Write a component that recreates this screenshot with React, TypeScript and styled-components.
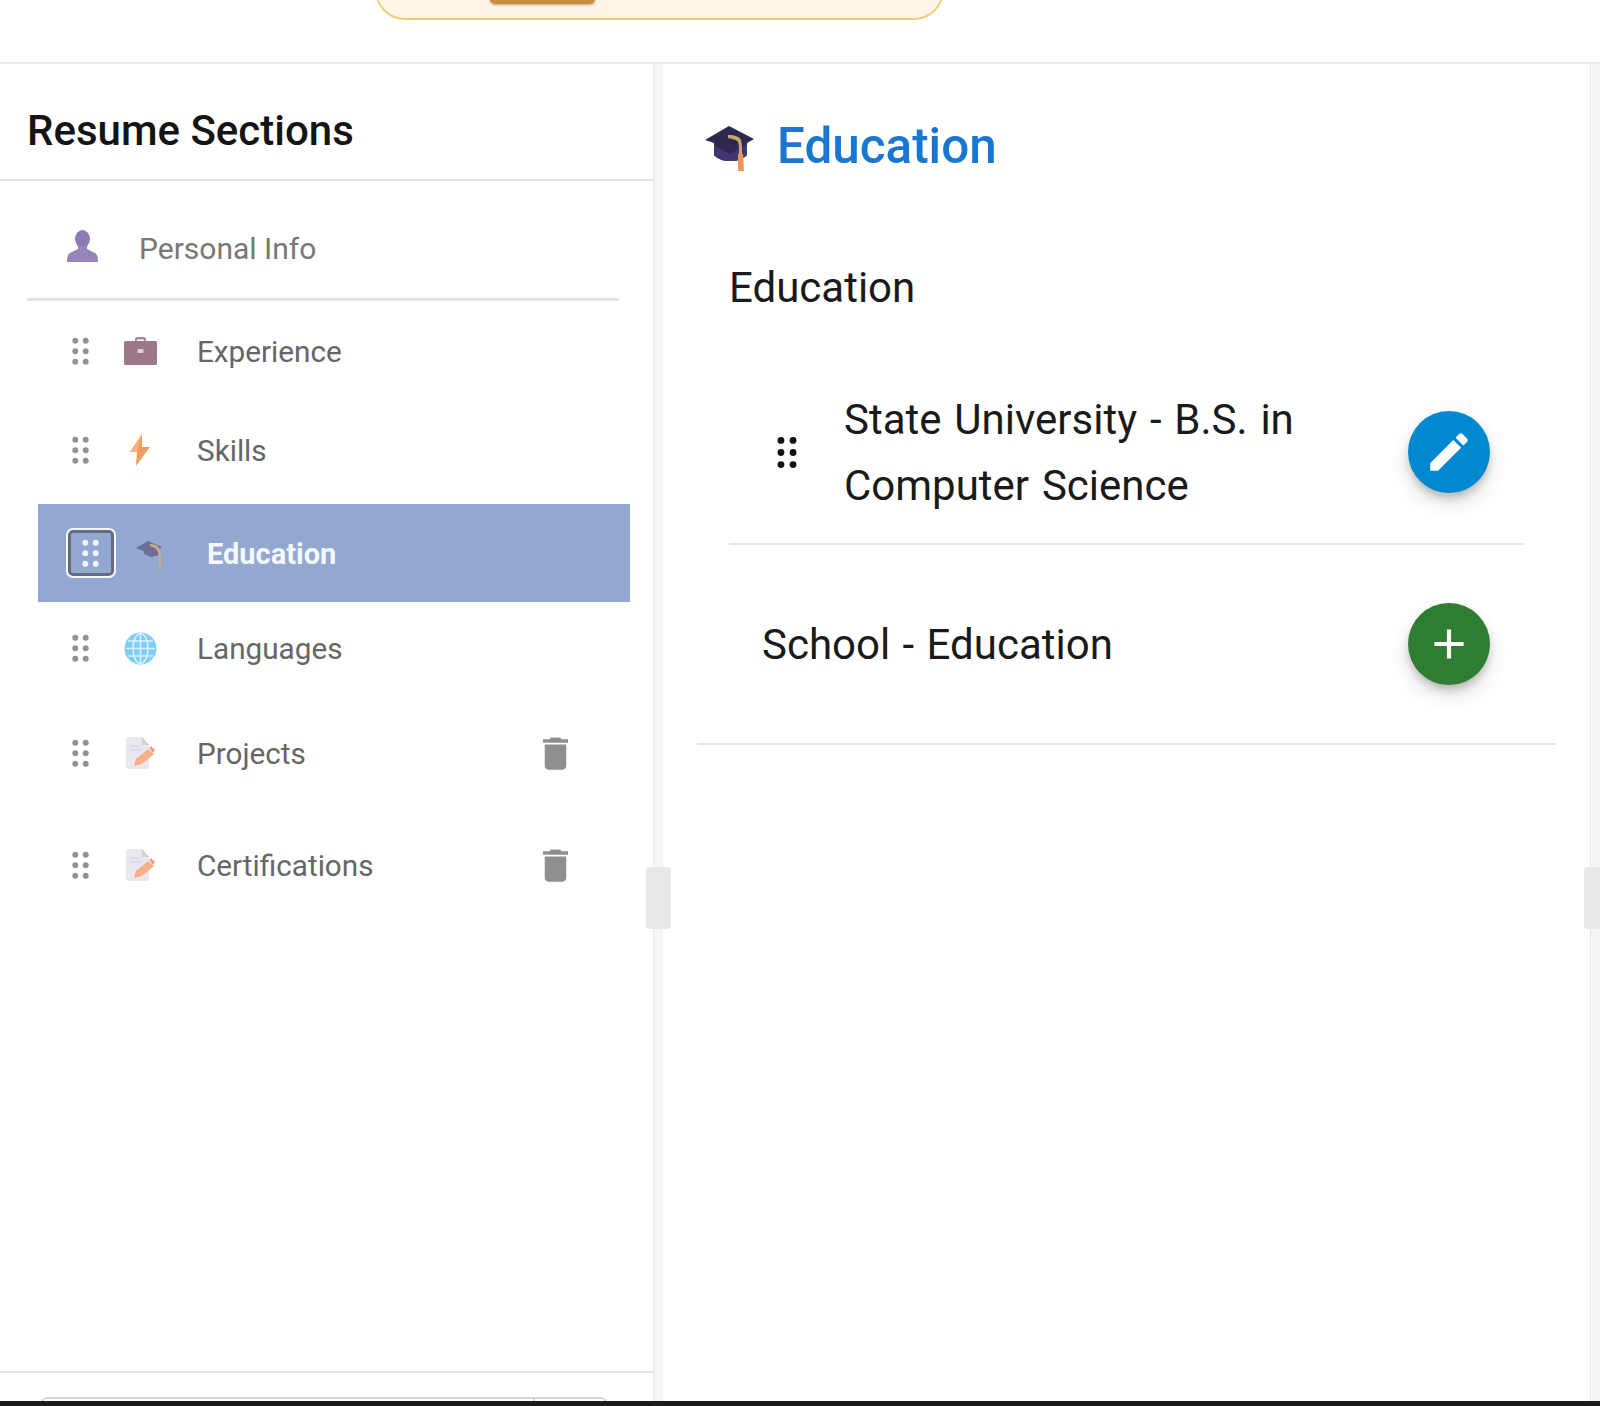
import styled, { createGlobalStyle } from "styled-components";

const GlobalStyle = createGlobalStyle`
  html, body {
    margin: 0;
    padding: 0;
    background: #fff;
    font-family: Roboto, "Liberation Sans", sans-serif;
  }
`;

const GripIcon = ({ width, color }: { width: number; color: string }) => (
  <svg width={width} height={width * 1.5} viewBox="0 0 20 30" fill={color}>
    {[4, 15, 26].map((y) => (
      <g key={y}>
        <circle cx="4.500" cy={y} r="3.100" />
        <circle cx="15.500" cy={y} r="3.100" />
      </g>
    ))}
  </svg>
);

const PersonIcon = () => (
  <svg width="31" height="32" viewBox="0 0 31 32">
    <ellipse cx="15.500" cy="9" rx="7.500" ry="9" fill="#8d7cb3" />
    <path d="M11 16h9v3l8 4c2 1 3 4 3 9H0c0-5 1-8 3-9l8-4z" fill="#9684bb" />
  </svg>
);

const BriefcaseIcon = () => (
  <svg width="33" height="28" viewBox="0 0 33 28">
    <path d="M11 5V2c0-1 1-2 2-2h7c1 0 2 1 2 2v3h-2V2.500h-7V5z" fill="#a58a96" />
    <rect x="0" y="4" width="33" height="24" rx="1.500" fill="#9c7787" />
    <rect x="13.500" y="12" width="6" height="4" rx="1" fill="#e3cdd6" />
  </svg>
);

const BoltIcon = () => (
  <svg width="20" height="32" viewBox="0 0 20 32">
    <path d="M12 0 0 18h7L6 32l14-19h-8z" fill="#f39a5e" />
    <path d="M12 0 0 18h7z" fill="#f6b27c" />
  </svg>
);

const FadedCapIcon = () => (
  <svg width="28" height="29" viewBox="0 0 28 29">
    <path d="M0 7 12 0l14 6-3 3v5l-8 2-7-3V10z" fill="#6d6f94" />
    <path d="M14 3c5 0 9 2 10 6 1 5 1 12 1 19h-2c0-6 0-13-1-17-1-3-4-5-8-6z" fill="#d9a77c" />
  </svg>
);

const GlobeIcon = () => (
  <svg width="33" height="33" viewBox="0 0 33 33">
    <circle cx="16.500" cy="16.500" r="16" fill="#7fcdf5" />
    <g fill="none" stroke="#d7f0fc" strokeWidth="1.600">
      <ellipse cx="16.500" cy="16.500" rx="7.500" ry="15" />
      <path d="M16.500 1.500v30M2 16.500h29M4 9h25M4 24h25" />
    </g>
  </svg>
);

const DocIcon = () => (
  <svg width="29" height="32" viewBox="0 0 29 32">
    <path d="M0 2c0-1 1-2 2-2h14l7 8v24H2c-1 0-2-1-2-2z" fill="#ebe7f0" />
    <path d="M16 0v8h7z" fill="#d5cfde" />
    <path d="M4 9h10M4 13h12" stroke="#d2cddb" strokeWidth="1.200" />
    <path d="M8 29l2-7L22 12l6 5-12 10z" fill="#f8b088" />
    <path d="M23 11l2-2 4 4-2 3z" fill="#f09a95" />
  </svg>
);

const TrashIcon = () => (
  <svg width="43" height="43" viewBox="0 0 24 24" fill="#8f8f8f">
    <path d="M6 19c0 1.100.9 2 2 2h8c1.100 0 2-.9 2-2V7H6v12zM19 4h-3.500l-1-1h-5l-1 1H5v2h14V4z" />
  </svg>
);

const CapIcon = () => (
  <svg width="49" height="45" viewBox="0 0 49 45">
    <path d="M0 14 24 0l25 13-7 4v12c-5 5-10 6-17 6-7 0-12-2-16-6V17z" fill="#2e2850" />
    <path d="M9 19 25 28l17-10v11c-5 5-10 6-17 6-7 0-12-2-16-6z" fill="#43356f" />
    <path d="M23 9c7 0 12 2 13 5 1 3 1 8 1 14h-3c0-5 0-10-1-12-1-2-5-3-10-4z" fill="#c9a85f" />
    <path d="M33 28h5l1 17h-6z" fill="#f0955a" />
  </svg>
);

const EditIcon = () => (
  <svg width="50" height="50" viewBox="0 0 24 24" fill="#fff">
    <path d="M3 17.250V21h3.750L17.810 9.940l-3.750-3.750L3 17.250zM20.710 7.040c.39-.39.39-1.020 0-1.410l-2.340-2.340c-.39-.39-1.020-.39-1.410 0l-1.830 1.830 3.750 3.750 1.830-1.830z" />
  </svg>
);

const AddIcon = () => (
  <svg width="50" height="50" viewBox="0 0 24 24" fill="#fff">
    <path d="M19 13h-6v6h-2v-6H5v-2h6V5h2v6h6v2z" />
  </svg>
);

type Section = {
  label: string;
  icon: JSX.Element;
  height: number;
  active?: boolean;
  removable?: boolean;
};

const sections: Section[] = [
  { label: "Experience", icon: <BriefcaseIcon />, height: 98 },
  { label: "Skills", icon: <BoltIcon />, height: 100 },
  { label: "Education", icon: <FadedCapIcon />, height: 98, active: true },
  { label: "Languages", icon: <GlobeIcon />, height: 92 },
  { label: "Projects", icon: <DocIcon />, height: 118, removable: true },
  { label: "Certifications", icon: <DocIcon />, height: 106, removable: true },
];

export default function App() {
  return (
    <Page>
      <GlobalStyle />
      <TopBar>
        <Banner>
          <BannerThumb />
        </Banner>
      </TopBar>
      <Workspace>
        <Sidebar>
          <SidebarHeader>
            <SidebarTitle>Resume Sections</SidebarTitle>
          </SidebarHeader>
          <SidebarBody>
            <PersonalRow>
              <PersonSlot>
                <PersonIcon />
              </PersonSlot>
              <PersonalLabel>Personal Info</PersonalLabel>
            </PersonalRow>
            <SectionList>
              {sections.map((s) => (
                <SectionRow key={s.label} $height={s.height} $active={s.active}>
                  <GripSlot $active={s.active}>
                    <GripIcon width={19} color={s.active ? "#f2f5ff" : "#929292"} />
                  </GripSlot>
                  <IconSlot $active={s.active}>{s.icon}</IconSlot>
                  <SectionLabel $active={s.active}>{s.label}</SectionLabel>
                  {s.removable && (
                    <RemoveSlot>
                      <TrashIcon />
                    </RemoveSlot>
                  )}
                </SectionRow>
              ))}
            </SectionList>
          </SidebarBody>
          <SidebarFooter>
            <FooterField>
              <FooterFieldEnd />
            </FooterField>
          </SidebarFooter>
        </Sidebar>
        <Resizer>
          <ResizeHandle />
        </Resizer>
        <Editor>
          <EditorHeader>
            <HeaderIcon>
              <CapIcon />
            </HeaderIcon>
            <EditorTitle>Education</EditorTitle>
          </EditorHeader>
          <EntryGroup>
            <GroupTitle>Education</GroupTitle>
            <EntryRow>
              <EntryGrip>
                <GripIcon width={22} color="#111" />
              </EntryGrip>
              <EntryText>State University - B.S. in Computer Science</EntryText>
              <RoundButton $color="#0288d1">
                <EditIcon />
              </RoundButton>
            </EntryRow>
            <AddRow>
              <AddLabel>School - Education</AddLabel>
              <RoundButton $color="#2e7d32">
                <AddIcon />
              </RoundButton>
            </AddRow>
          </EntryGroup>
        </Editor>
        <Resizer>
          <ResizeHandle $edge />
        </Resizer>
      </Workspace>
      <BottomEdge />
    </Page>
  );
}

const Page = styled.div`
  width: 1600px;
  height: 1406px;
  display: flex;
  flex-direction: column;
  overflow: hidden;
  background: #fff;
`;

const TopBar = styled.header`
  height: 64px;
  flex: none;
  box-sizing: border-box;
  border-bottom: 2px solid #e9ebeb;
  padding-left: 375px;
`;

const Banner = styled.div`
  width: 569px;
  height: 60px;
  margin-top: -40px;
  box-sizing: border-box;
  display: flex;
  align-items: flex-end;
  padding: 0 0 14px 113px;
  background: #fff6e8;
  border: 2px solid #f3cd75;
  border-radius: 30px;
`;

const BannerThumb = styled.div`
  width: 105px;
  height: 12px;
  border-radius: 5px;
  background: #c98d3f;
  box-shadow: 0 1px 3px rgba(120, 80, 30, 0.5);
`;

const Workspace = styled.div`
  flex: 1;
  min-height: 0;
  display: flex;
`;

const Sidebar = styled.aside`
  width: 653px;
  flex: none;
  display: flex;
  flex-direction: column;
`;

const SidebarHeader = styled.div`
  height: 117px;
  box-sizing: border-box;
  flex: none;
  display: flex;
  align-items: center;
  padding: 18px 0 0 27px;
  border-bottom: 2px solid #e3e5e5;
`;

const SidebarTitle = styled.h2`
  margin: 0;
  font-size: 42px;
  font-weight: 500;
  color: #141414;
`;

const SidebarBody = styled.div`
  flex: 1;
  min-height: 0;
`;

const PersonalRow = styled.div`
  height: 120px;
  box-sizing: border-box;
  margin: 0 34px 0 27px;
  display: flex;
  align-items: center;
  padding: 17px 0 0 40px;
  border-bottom: 3px solid #e2e4e4;
`;

const PersonSlot = styled.div`
  width: 31px;
  margin: -4px 41px 0 0;
  display: flex;
`;

const PersonalLabel = styled.span`
  font-size: 30px;
  color: #777;
`;

const SectionList = styled.div`
  margin: 1px 23px 0 38px;
  display: flex;
  flex-direction: column;
`;

const SectionRow = styled.div<{ $height: number; $active?: boolean }>`
  height: ${({ $height }) => $height}px;
  margin-top: ${({ $active }) => ($active ? "4px" : "0")};
  flex: none;
  display: flex;
  align-items: center;
  padding-left: ${({ $active }) => ($active ? "28px" : "18px")};
  background: ${({ $active }) => ($active ? "#93a8d1" : "transparent")};
`;

const GripSlot = styled.div<{ $active?: boolean }>`
  width: 50px;
  height: 50px;
  flex: none;
  box-sizing: border-box;
  display: flex;
  align-items: center;
  justify-content: center;
  padding-right: 2px;
  border-radius: 7px;
  ${({ $active }) => $active && "border: 2px solid #f4f6fb; box-shadow: inset 0 0 0 3px #666b7d;"}
`;

const IconSlot = styled.div<{ $active?: boolean }>`
  width: 68px;
  margin: ${({ $active }) => ($active ? "4px" : "0")} 23px 0 0;
  flex: none;
  display: flex;
  justify-content: center;
`;

const SectionLabel = styled.span<{ $active?: boolean }>`
  font-size: ${({ $active }) => ($active ? "29px" : "29.7px")};
  font-weight: ${({ $active }) => ($active ? 700 : 400)};
  color: ${({ $active }) => ($active ? "#f5f8ff" : "#666")};
  margin-top: ${({ $active }) => ($active ? "2px" : "0")};
`;

const RemoveSlot = styled.div`
  margin-left: auto;
  padding-right: 53px;
  display: flex;
`;

const SidebarFooter = styled.div`
  height: 30px;
  flex: none;
  box-sizing: border-box;
  border-top: 2px solid #e6e8e8;
  padding: 24px 46px 0 41px;
`;

const FooterField = styled.div`
  height: 8px;
  display: flex;
  justify-content: flex-end;
  border: 2px solid #d6d6d6;
  border-radius: 6px 6px 0 0;
`;

const FooterFieldEnd = styled.div`
  width: 70px;
  border-left: 2px solid #d6d6d6;
`;

const Resizer = styled.div`
  width: 10px;
  flex: none;
  position: relative;
  background: #f4f6f6;
  border-left: 1px solid #e6e9e9;
  box-sizing: border-box;
`;

const ResizeHandle = styled.div<{ $edge?: boolean }>`
  position: absolute;
  top: 803px;
  left: ${({ $edge }) => ($edge ? "-7px" : "-8px")};
  width: ${({ $edge }) => ($edge ? "17px" : "25px")};
  height: 62px;
  border-radius: 4px;
  background: #e7e9e9;
`;

const Editor = styled.main`
  flex: 1;
  min-width: 0;
  box-sizing: border-box;
  padding: 0 34px;
`;

const EditorHeader = styled.div`
  display: flex;
  align-items: center;
  height: 162px;
  padding-left: 8px;
`;

const HeaderIcon = styled.div`
  display: flex;
  margin: 7px 23px 0 0;
`;

const EditorTitle = styled.h1`
  margin: 2px 0 0;
  font-size: 49.400px;
  font-weight: 500;
  color: #1976d2;
`;

const EntryGroup = styled.section`
  border-bottom: 2px solid #e3e5e5;
  padding: 0 33px 0 32px;
`;

const GroupTitle = styled.h3`
  margin: 0;
  height: 135px;
  font-size: 42px;
  font-weight: 400;
  line-height: 124px;
  color: #1a1a1a;
`;

const EntryRow = styled.div`
  height: 184px;
  box-sizing: border-box;
  display: flex;
  align-items: center;
  border-bottom: 2px solid #e3e5e5;
  padding: 0 33px 0 47px;
`;

const EntryGrip = styled.div`
  width: 68px;
  flex: none;
  display: flex;
`;

const EntryText = styled.div`
  width: 500px;
  padding-top: 2px;
  font-size: 42px;
  word-spacing: 2.400px;
  line-height: 66px;
  color: #1a1a1a;
`;

const RoundButton = styled.div<{ $color: string }>`
  width: 82px;
  height: 82px;
  flex: none;
  margin-left: auto;
  border-radius: 50%;
  display: flex;
  align-items: center;
  justify-content: center;
  background: ${({ $color }) => $color};
  box-shadow: 0 6px 10px -2px rgba(0, 0, 0, 0.25), 0 10px 20px 2px rgba(0, 0, 0, 0.1);
`;

const AddRow = styled.div`
  height: 198px;
  box-sizing: border-box;
  display: flex;
  align-items: center;
  padding: 0 33px;
`;

const AddLabel = styled.div`
  font-size: 42px;
  word-spacing: 2px;
  color: #1a1a1a;
`;

const BottomEdge = styled.div`
  height: 5px;
  flex: none;
  background: #1c1c1c;
`;
